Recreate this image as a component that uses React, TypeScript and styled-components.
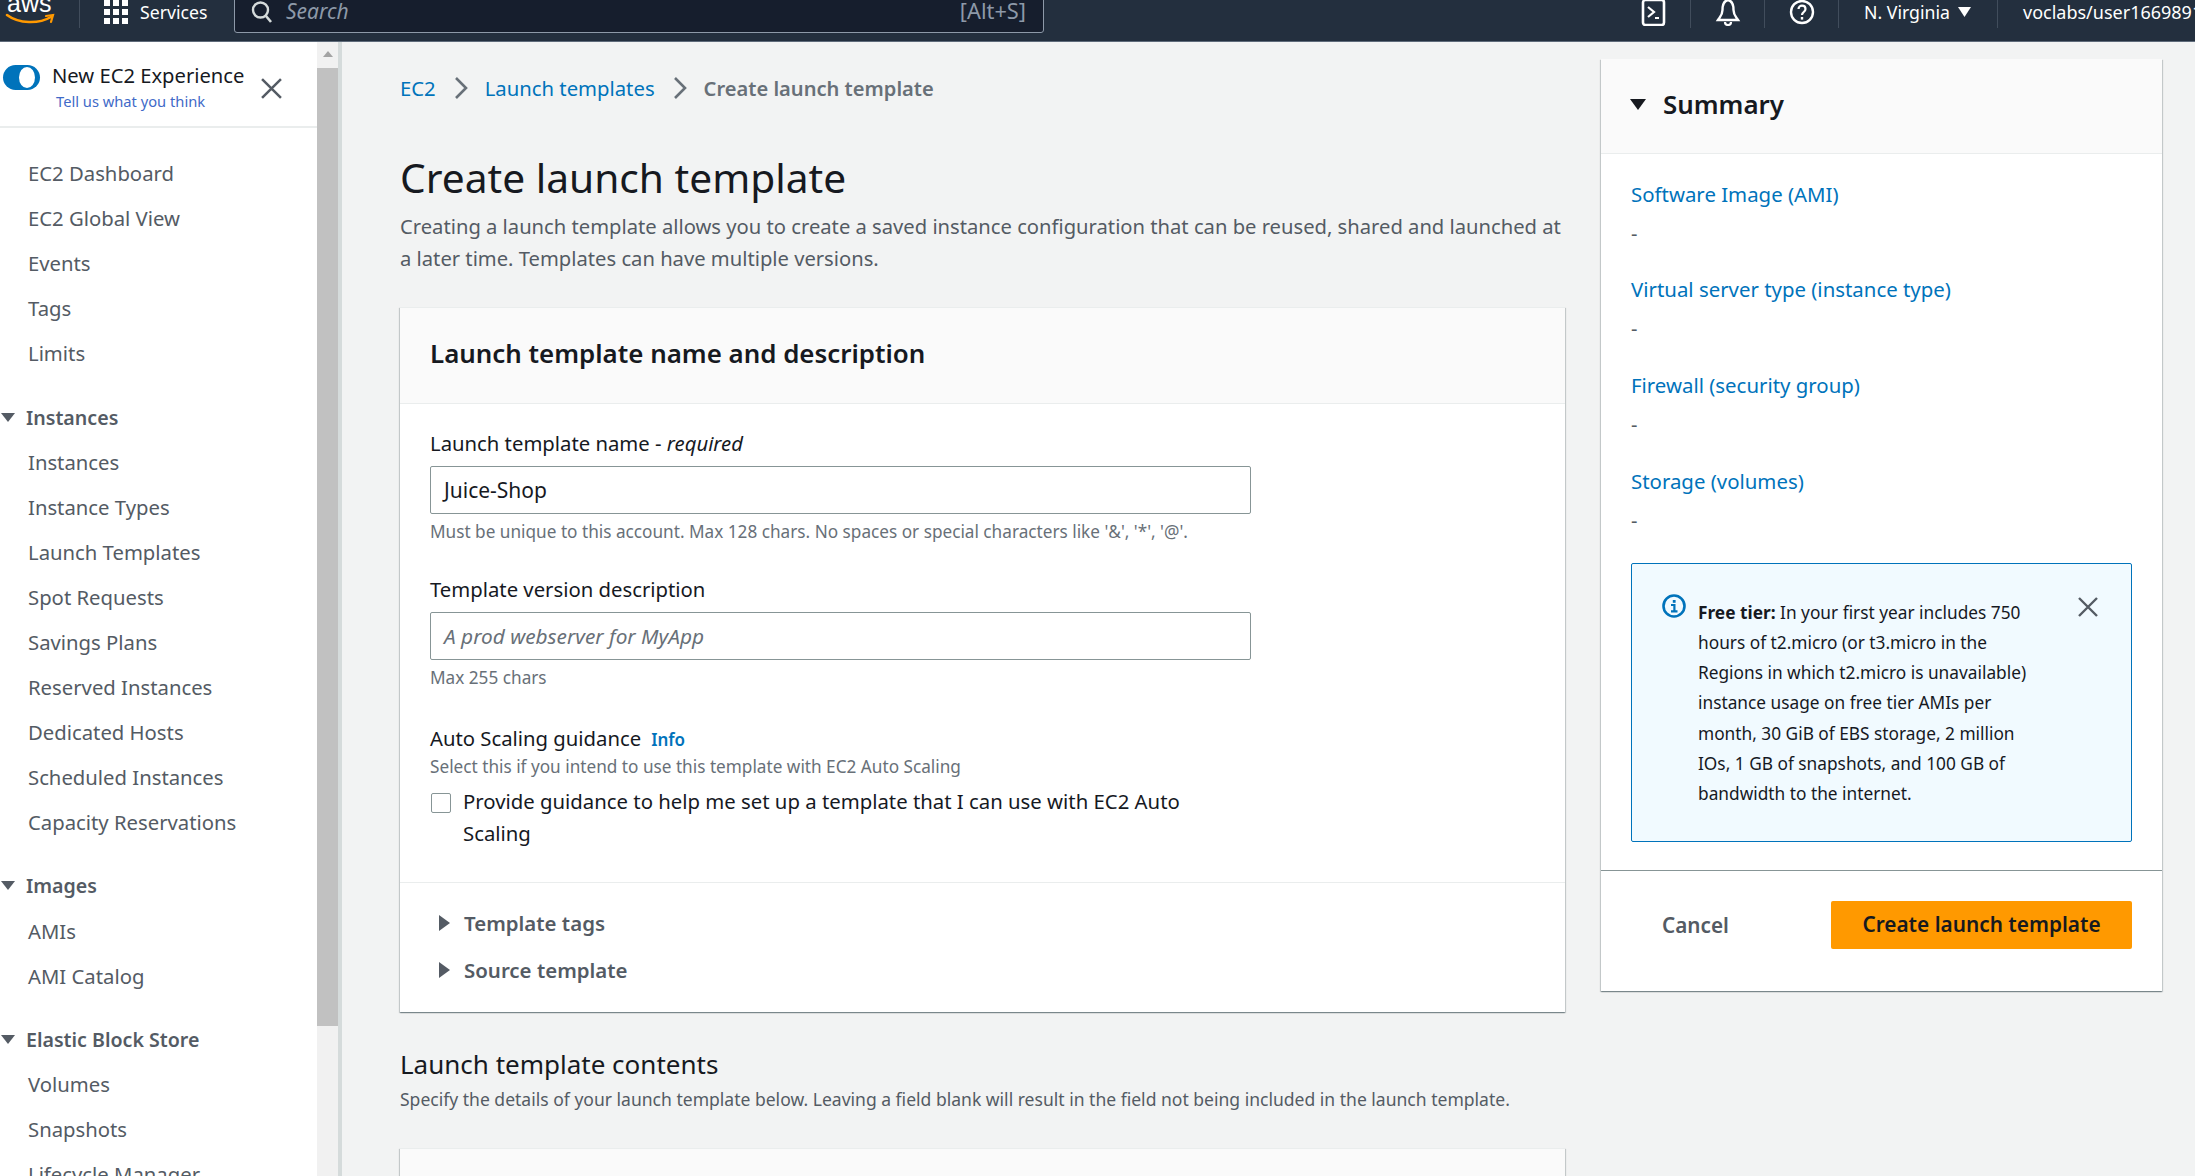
import React from "react";
import styled, { createGlobalStyle } from "styled-components";

const Global = createGlobalStyle`
  html, body { margin: 0; padding: 0; height: 100%; overflow: hidden; }
  body { font-family: "Noto Sans", "Open Sans", sans-serif; color: #16191f; background: #f2f3f3; }
  * { box-sizing: border-box; }
`;

const Page = styled.div`
  width: 2195px;
  height: 1176px;
  display: flex;
  flex-direction: column;
  overflow: hidden;
`;

const TopBar = styled.header`
  flex: 0 0 42px;
  height: 42px;
  background: #232f3e;
  border-bottom: 1px solid #5f6b7a;
  display: flex;
  align-items: flex-end;
  padding-bottom: 13px;
  color: #fff;
  font-size: 17.7px;
  white-space: nowrap;
  overflow: hidden;
`;

const Logo = styled.svg`
  width: 56px;
  height: 40px;
  flex: none;
  margin-left: 1px;
`;

const BarDivider = styled.span<{ $gap?: number }>`
  width: 1px;
  height: 33px;
  background: #414d5c;
  flex: none;
  margin-left: ${(p) => p.$gap ?? 0}px;
`;

const ServicesButton = styled.div`
  display: flex;
  align-items: center;
  gap: 12px;
  margin-left: 24px;
  width: 130px;
  height: 33px;
`;

const GridIcon = styled.svg`
  width: 24px;
  height: 24px;
  flex: none;
`;

const SearchBox = styled.div`
  width: 810px;
  height: 60px;
  flex: none;
  margin-bottom: -5px;
  background: #161e2d;
  border: 1px solid #8d99a8;
  border-radius: 3px;
  display: flex;
  align-items: flex-end;
  padding: 0 17px 8px 16px;
  font-size: 21px;
  line-height: 26px;
`;

const SearchText = styled.span`
  font-style: italic;
  margin-left: 13px;
  flex: 1;
  color: #8d99a8;
`;

const ShortCut = styled.span`
  font-size: 21.8px;
  color: #8d99a8;
`;

const BarSpacer = styled.div`
  flex: 1;
`;

const BarIcon = styled.svg`
  width: 26px;
  height: 28px;
  flex: none;
`;

const BarIconCell = styled.div`
  width: 74px;
  height: 33px;
  display: flex;
  align-items: center;
  justify-content: center;
  border-right: 1px solid #414d5c;
  flex: none;
`;

const RegionCell = styled.div`
  display: flex;
  align-items: center;
  gap: 8px;
  height: 33px;
  width: 159px;
  padding-left: 25px;
  border-right: 1px solid #414d5c;
  flex: none;
`;

const AccountCell = styled.div`
  height: 33px;
  display: flex;
  align-items: center;
  padding-left: 25px;
  width: 197px;
  font-size: 18px;
  overflow: hidden;
  flex: none;
`;

const Body = styled.div`
  flex: 1;
  display: flex;
  min-height: 0;
`;

const Sidebar = styled.nav`
  flex: 0 0 317px;
  background: #fff;
  overflow: hidden;
`;

const Banner = styled.div`
  height: 86px;
  border-bottom: 2px solid #eaeded;
  display: flex;
  padding: 22px 0 0 3px;
`;

const Toggle = styled.span`
  width: 37px;
  height: 25px;
  border-radius: 13px;
  background: #0073bb;
  flex: none;
  display: flex;
  align-items: center;
  justify-content: flex-end;
  padding-right: 5px;
  margin-top: 1px;
  &::after {
    content: "";
    width: 16px;
    height: 21px;
    border-radius: 50%;
    background: #fff;
  }
`;

const BannerText = styled.div`
  margin-left: 12px;
  width: 200px;
`;

const BannerTitle = styled.div`
  font-size: 20.2px;
  line-height: 26px;
  margin-top: -2px;
  white-space: nowrap;
`;

const BannerLink = styled.div`
  font-size: 14.7px;
  line-height: 20px;
  margin: 3px 0 0 4px;
  color: #3f6ac8;
  white-space: nowrap;
`;

const CloseIcon = styled.svg<{ $size: number; $mt?: number; $ml?: number }>`
  width: ${(p) => p.$size}px;
  height: ${(p) => p.$size}px;
  flex: none;
  margin-top: ${(p) => p.$mt ?? 0}px;
  margin-left: ${(p) => p.$ml ?? 0}px;
`;

const NavList = styled.div`
  padding-top: 23px;
`;

const NavItem = styled.div`
  height: 45.1px;
  line-height: 45.1px;
  padding-left: 28px;
  font-size: 20.3px;
  color: #545b64;
  white-space: nowrap;
`;

const NavHead = styled.div`
  height: 45.1px;
  margin-top: 18px;
  padding-left: 1px;
  display: flex;
  align-items: center;
  font-size: 19.6px;
  font-weight: 600;
  color: #545b64;
  white-space: nowrap;
  gap: 11px;
`;

const CaretDown = styled.span`
  width: 0;
  height: 0;
  border-left: 7px solid transparent;
  border-right: 7px solid transparent;
  border-top: 9px solid #545b64;
  flex: none;
`;

const Scrollbar = styled.div`
  flex: 0 0 25px;
  background: #f1f1f1;
  border-right: 4px solid #d5dbdb;
  display: flex;
  flex-direction: column;
  align-items: center;
  padding-top: 9px;
`;

const ScrollArrow = styled.span`
  width: 0;
  height: 0;
  border-left: 5px solid transparent;
  border-right: 5px solid transparent;
  border-bottom: 6px solid #a3a3a3;
  flex: none;
`;

const ScrollThumb = styled.div`
  width: 100%;
  height: 958px;
  margin-top: 11px;
  background: #c1c1c1;
`;

const Main = styled.main`
  flex: 1;
  display: flex;
  min-width: 0;
  padding: 17px 31px 0 58px;
  gap: 36px;
  overflow: hidden;
`;

const Column = styled.div`
  width: 1165px;
  flex: none;
`;

const Crumbs = styled.div`
  display: flex;
  align-items: center;
  height: 28px;
  margin-top: 15px;
  font-size: 20.3px;
  white-space: nowrap;
`;

const CrumbLink = styled.span`
  color: #0073bb;
`;

const CrumbCurrent = styled.span`
  font-size: 20.1px;
  color: #687078;
  font-weight: 600;
`;

const CrumbChevron = styled.svg`
  width: 14px;
  height: 24px;
  margin: 0 17px 0 18px;
  flex: none;
`;

const Title = styled.h1`
  margin: 50px 0 0;
  font-size: 40.7px;
  line-height: 50px;
  font-weight: 400;
  color: #16191f;
  white-space: nowrap;
`;

const Lede = styled.p`
  margin: 7.5px 0 0;
  font-size: 20.22px;
  line-height: 32.5px;
  color: #545b64;
`;

const Card = styled.section`
  margin-top: 32px;
  background: #fff;
  border-top: 1px solid #eaeded;
  box-shadow: 0 1px 1px 0 rgba(0, 28, 36, 0.3), 1px 1px 1px 0 rgba(0, 28, 36, 0.15), -1px 1px 1px 0 rgba(0, 28, 36, 0.15);
`;

const CardHead = styled.div`
  height: 96px;
  background: #fafafa;
  border-bottom: 1px solid #eaeded;
  padding: 0 0 5px 30px;
  display: flex;
  align-items: center;
`;

const CardTitle = styled.h2`
  margin: 0;
  font-size: 25.9px;
  font-weight: 600;
  white-space: nowrap;
`;

const CardBody = styled.div`
  padding: 24px 30px 0;
`;

const Field = styled.div<{ $gap: number }>`
  margin-bottom: ${(p) => p.$gap}px;
`;

const Label = styled.div`
  font-size: 20.3px;
  line-height: 30px;
  white-space: nowrap;
`;

const Required = styled.i`
  font-style: italic;
`;

const InputBox = styled.div<{ $placeholder?: boolean }>`
  width: 821px;
  height: 48px;
  margin-top: 8px;
  border: 1px solid #879596;
  border-radius: 2px;
  background: #fff;
  padding-left: 13px;
  display: flex;
  align-items: center;
  font-size: ${(p) => (p.$placeholder ? 20.8 : 21)}px;
  color: ${(p) => (p.$placeholder ? "#687078" : "#16191f")};
  font-style: ${(p) => (p.$placeholder ? "italic" : "normal")};
`;

const Help = styled.div`
  font-size: 17.2px;
  line-height: 24px;
  margin-top: 6px;
  color: #687078;
  white-space: nowrap;
`;

const HelpTight = styled(Help)`
  margin-top: 0;
`;

const InfoLink = styled.span`
  color: #0073bb;
  font-size: 17px;
  font-weight: 600;
  margin-left: 10px;
`;

const CheckRow = styled.div`
  display: flex;
  margin-top: 5.5px;
  width: 800px;
`;

const CheckBox = styled.span`
  width: 20px;
  height: 20px;
  margin: 8px 12px 0 1px;
  border: 1px solid #879596;
  border-radius: 2px;
  background: #fff;
  flex: none;
`;

const CheckText = styled.div`
  font-size: 20.33px;
  line-height: 32.5px;
`;

const Expanders = styled.div`
  border-top: 1px solid #eaeded;
  padding: 16.5px 0 19px 39px;
`;

const ExpanderRow = styled.div`
  height: 47px;
  display: flex;
  align-items: center;
  gap: 14px;
  font-size: 20.45px;
  font-weight: 600;
  color: #545b64;
`;

const CaretRight = styled.span`
  width: 0;
  height: 0;
  border-top: 8px solid transparent;
  border-bottom: 8px solid transparent;
  border-left: 11px solid #545b64;
  flex: none;
`;

const SectionTitle = styled.h2`
  margin: 33px 0 0;
  font-size: 26px;
  line-height: 38px;
  font-weight: 400;
  white-space: nowrap;
`;

const SectionText = styled.p`
  margin: 2px 0 0;
  font-size: 17.55px;
  line-height: 28px;
  color: #545b64;
  white-space: nowrap;
`;

const NextCard = styled.section`
  margin-top: 34.5px;
  height: 60px;
  background: #fafafa;
  border-top: 1px solid #eaeded;
  box-shadow: 0 1px 1px 0 rgba(0, 28, 36, 0.3), 1px 1px 1px 0 rgba(0, 28, 36, 0.15), -1px 1px 1px 0 rgba(0, 28, 36, 0.15);
`;

const Summary = styled.aside`
  width: 561px;
  flex: none;
  height: 932px;
  background: #fff;
  box-shadow: 0 1px 1px 0 rgba(0, 28, 36, 0.3), 1px 1px 1px 0 rgba(0, 28, 36, 0.15), -1px 1px 1px 0 rgba(0, 28, 36, 0.15);
  display: flex;
  flex-direction: column;
`;

const SummaryHead = styled.div`
  height: 95px;
  background: #fafafa;
  border-bottom: 1px solid #eaeded;
  display: flex;
  align-items: center;
  gap: 17px;
  padding: 0 0 4px 29px;
  font-size: 25.9px;
  font-weight: 600;
`;

const CaretDownDark = styled.span`
  width: 0;
  height: 0;
  border-left: 8px solid transparent;
  border-right: 8px solid transparent;
  border-top: 11px solid #16191f;
  flex: none;
`;

const SummaryBody = styled.div`
  padding: 19.5px 30px 0;
  height: 717px;
  border-bottom: 1px solid #879596;
`;

const SummaryEntry = styled.div`
  height: 95.8px;
`;

const SummaryLink = styled.div`
  font-size: 20.4px;
  line-height: 41px;
  color: #0073bb;
  white-space: nowrap;
`;

const SummaryDash = styled.div`
  font-size: 20px;
  line-height: 38px;
  color: #545b64;
`;

const Notice = styled.div`
  width: 501px;
  height: 279px;
  margin-top: 6px;
  background: #f1faff;
  border: 1px solid #0073bb;
  border-radius: 2px;
  padding: 30px 24px 0 30px;
  display: flex;
`;

const NoticeIcon = styled.svg`
  width: 26px;
  height: 26px;
  flex: none;
  margin-right: 10px;
`;

const NoticeText = styled.div`
  width: 345px;
  flex: none;
  font-size: 17.3px;
  line-height: 30.1px;
  margin-top: 4.5px;
  color: #16191f;
`;

const Actions = styled.div`
  flex: 1;
  display: flex;
  align-items: flex-start;
  justify-content: space-between;
  padding: 30px 30px 0 61px;
`;

const CancelButton = styled.div`
  height: 47px;
  display: flex;
  align-items: center;
  font-size: 20.7px;
  font-weight: 600;
  color: #545b64;
`;

const PrimaryButton = styled.div`
  width: 301px;
  height: 48px;
  padding-bottom: 2px;
  border-radius: 2px;
  background: #ff9900;
  display: flex;
  align-items: center;
  justify-content: center;
  font-size: 20.8px;
  font-weight: 600;
  color: #16191f;
  white-space: nowrap;
`;

const Cross = ({ size, color, mt, ml }: { size: number; color: string; mt?: number; ml?: number }) => (
  <CloseIcon $size={size} $mt={mt} $ml={ml} viewBox="0 0 20 20" fill="none">
    <path d="M1 1 L19 19 M19 1 L1 19" stroke={color} strokeWidth="2.4" />
  </CloseIcon>
);

const Chevron = () => (
  <CrumbChevron viewBox="0 0 14 24" fill="none">
    <path d="M2 2 L12 12 L2 22" stroke="#687078" strokeWidth="2.6" />
  </CrumbChevron>
);

const groups: { head?: string; items: string[] }[] = [
  { items: ["EC2 Dashboard", "EC2 Global View", "Events", "Tags", "Limits"] },
  {
    head: "Instances",
    items: [
      "Instances",
      "Instance Types",
      "Launch Templates",
      "Spot Requests",
      "Savings Plans",
      "Reserved Instances",
      "Dedicated Hosts",
      "Scheduled Instances",
      "Capacity Reservations",
    ],
  },
  { head: "Images", items: ["AMIs", "AMI Catalog"] },
  { head: "Elastic Block Store", items: ["Volumes", "Snapshots", "Lifecycle Manager"] },
];

const summary = [
  "Software Image (AMI)",
  "Virtual server type (instance type)",
  "Firewall (security group)",
  "Storage (volumes)",
];

export default function App() {
  return (
    <Page>
      <Global />
      <TopBar>
        <Logo viewBox="0 0 56 40" fill="none">
          <text x="6" y="24" fill="#fff" fontSize="25" fontFamily="'Liberation Sans', sans-serif">aws</text>
          <path d="M6 27 C18 36, 38 36, 50 29" stroke="#ff9900" strokeWidth="2.6" strokeLinecap="round" />
          <path d="M45 28 L52 27 L50 34" stroke="#ff9900" strokeWidth="2.2" strokeLinecap="round" />
        </Logo>
        <BarDivider $gap={22} />
        <ServicesButton>
          <GridIcon viewBox="0 0 24 24" fill="#fff">
            {[0, 9, 18].flatMap((y) =>
              [0, 9, 18].map((x) => <rect key={`${x}-${y}`} x={x} y={y} width="6" height="6" />),
            )}
          </GridIcon>
          Services
        </ServicesButton>
        <SearchBox>
          <svg width="22" height="24" viewBox="0 0 22 24" fill="none">
            <circle cx="9.5" cy="10" r="7.5" stroke="#d5dbdb" strokeWidth="2.4" />
            <path d="M15 16 L20 22" stroke="#d5dbdb" strokeWidth="2.6" />
          </svg>
          <SearchText>Search</SearchText>
          <ShortCut>[Alt+S]</ShortCut>
        </SearchBox>
        <BarSpacer />
        <BarIconCell>
          <BarIcon viewBox="0 0 26 28" fill="none">
            <rect x="2" y="2" width="21" height="25" rx="2.5" stroke="#fff" strokeWidth="2.6" />
            <path d="M7 9 L13 14 L7 19 M14 20 L18 20" stroke="#fff" strokeWidth="2.2" />
          </BarIcon>
        </BarIconCell>
        <BarIconCell>
          <BarIcon viewBox="0 0 26 28" fill="none">
            <path d="M13 2 C8 3 7.5 8 7.5 12 C7.5 17 5 19 3 22 L23 22 C21 19 18.5 17 18.5 12 C18.5 8 18 3 13 2 Z" stroke="#fff" strokeWidth="2.4" />
            <path d="M10 24 A3 3 0 0 0 16 24" stroke="#fff" strokeWidth="2.2" />
          </BarIcon>
        </BarIconCell>
        <BarIconCell>
          <BarIcon viewBox="0 0 26 28" fill="none">
            <circle cx="13" cy="14" r="11" stroke="#fff" strokeWidth="2.4" />
            <path d="M9.5 11 C9.5 6.5 16.5 6.5 16.5 11 C16.5 14 13 14 13 17" stroke="#fff" strokeWidth="2.2" />
            <rect x="11.8" y="19" width="2.4" height="2.6" fill="#fff" />
          </BarIcon>
        </BarIconCell>
        <RegionCell>
          N. Virginia
          <svg width="13" height="10" viewBox="0 0 13 10"><path d="M0 0 H13 L6.5 10 Z" fill="#fff" /></svg>
        </RegionCell>
        <AccountCell>voclabs/user1669891</AccountCell>
      </TopBar>
      <Body>
        <Sidebar>
          <Banner>
            <Toggle />
            <BannerText>
              <BannerTitle>New EC2 Experience</BannerTitle>
              <BannerLink>Tell us what you think</BannerLink>
            </BannerText>
            <Cross size={21} color="#545b64" mt={14} ml={9} />
          </Banner>
          <NavList>
            {groups.map((g, i) => (
              <div key={i}>
                {g.head && (
                  <NavHead>
                    <CaretDown />
                    {g.head}
                  </NavHead>
                )}
                {g.items.map((it) => (
                  <NavItem key={it}>{it}</NavItem>
                ))}
              </div>
            ))}
          </NavList>
        </Sidebar>
        <Scrollbar>
          <ScrollArrow />
          <ScrollThumb />
        </Scrollbar>
        <Main>
          <Column>
            <Crumbs>
              <CrumbLink>EC2</CrumbLink>
              <Chevron />
              <CrumbLink>Launch templates</CrumbLink>
              <Chevron />
              <CrumbCurrent>Create launch template</CrumbCurrent>
            </Crumbs>
            <Title>Create launch template</Title>
            <Lede>
              Creating a launch template allows you to create a saved instance configuration that can be reused, shared and launched at a later time. Templates can have multiple versions.
            </Lede>
            <Card>
              <CardHead>
                <CardTitle>Launch template name and description</CardTitle>
              </CardHead>
              <CardBody>
                <Field $gap={30.5}>
                  <Label>
                    Launch template name - <Required>required</Required>
                  </Label>
                  <InputBox>Juice-Shop</InputBox>
                  <Help>Must be unique to this account. Max 128 chars. No spaces or special characters like '&amp;', '*', '@'.</Help>
                </Field>
                <Field $gap={33}>
                  <Label>Template version description</Label>
                  <InputBox $placeholder>A prod webserver for MyApp</InputBox>
                  <Help>Max 255 chars</Help>
                </Field>
                <Field $gap={32}>
                  <Label>
                    Auto Scaling guidance<InfoLink>Info</InfoLink>
                  </Label>
                  <HelpTight>Select this if you intend to use this template with EC2 Auto Scaling</HelpTight>
                  <CheckRow>
                    <CheckBox />
                    <CheckText>Provide guidance to help me set up a template that I can use with EC2 Auto Scaling</CheckText>
                  </CheckRow>
                </Field>
              </CardBody>
              <Expanders>
                <ExpanderRow><CaretRight />Template tags</ExpanderRow>
                <ExpanderRow><CaretRight />Source template</ExpanderRow>
              </Expanders>
            </Card>
            <SectionTitle>Launch template contents</SectionTitle>
            <SectionText>Specify the details of your launch template below. Leaving a field blank will result in the field not being included in the launch template.</SectionText>
            <NextCard />
          </Column>
          <Summary>
            <SummaryHead>
              <CaretDownDark />
              Summary
            </SummaryHead>
            <SummaryBody>
              {summary.map((s) => (
                <SummaryEntry key={s}>
                  <SummaryLink>{s}</SummaryLink>
                  <SummaryDash>-</SummaryDash>
                </SummaryEntry>
              ))}
              <Notice>
                <NoticeIcon viewBox="0 0 26 26" fill="none">
                  <circle cx="12" cy="12" r="10.5" stroke="#0073bb" strokeWidth="2.6" />
                  <rect x="10.8" y="6" width="2.8" height="2.8" fill="#0073bb" />
                  <path d="M9 11 H12.4 V17 M9 17.4 H15.5" stroke="#0073bb" strokeWidth="2.2" />
                </NoticeIcon>
                <NoticeText>
                  <b>Free tier:</b> In your first year includes 750 hours of t2.micro (or t3.micro in the Regions in which t2.micro is unavailable) instance usage on free tier AMIs per month, 30 GiB of EBS storage, 2 million IOs, 1 GB of snapshots, and 100 GB of bandwidth to the internet.
                </NoticeText>
                <Cross size={20} color="#545b64" ml={35} mt={3} />
              </Notice>
            </SummaryBody>
            <Actions>
              <CancelButton>Cancel</CancelButton>
              <PrimaryButton>Create launch template</PrimaryButton>
            </Actions>
          </Summary>
        </Main>
      </Body>
    </Page>
  );
}
